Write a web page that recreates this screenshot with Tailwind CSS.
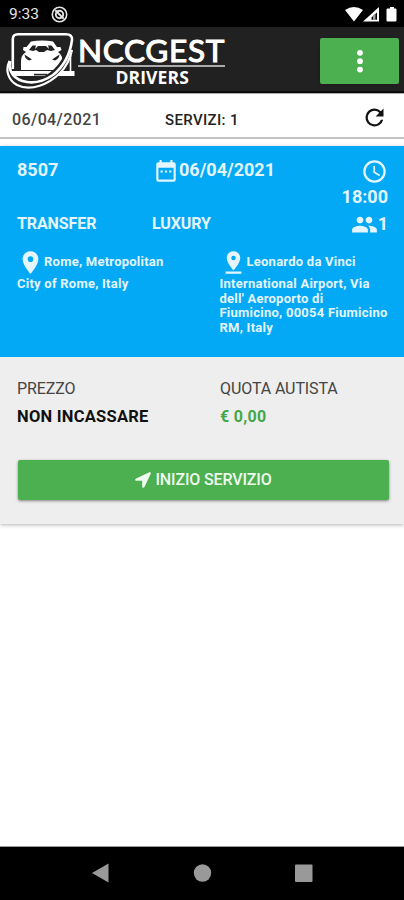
<!DOCTYPE html>
<html lang="it">
<head>
<meta charset="utf-8">
<meta name="viewport" content="width=device-width, initial-scale=1">
<title>NCCGEST Drivers</title>
<script src="https://cdn.jsdelivr.net/npm/@tailwindcss/browser@4"></script>
</head>
<body class="bg-white">
<div class="flex h-[900px] w-[404px] flex-col overflow-hidden bg-white font-['Roboto',sans-serif] whitespace-nowrap">
  <div class="flex h-[27px] shrink-0 items-center bg-black pt-[2px] pr-[7px] pl-[9px] text-[#e4e4e4]">
    <span class="w-[42px] text-[15.500px] leading-none">9:33</span>
    <svg class="h-[17px] w-[17px]" viewBox="0 0 17 17" fill="none" stroke="currentColor"><circle cx="8.5" cy="8.5" r="7.2" stroke-width="1.6"/><circle cx="8.5" cy="8.5" r="3.7" stroke-width="1.9"/><path d="M4.3 4.3l8.4 8.4" stroke-width="2"/></svg>
    <svg class="ml-auto h-[15px] w-[52px] text-white" viewBox="0 0 52 15" fill="currentColor"><path d="M0 3Q9 -3 18 3L9 14.5z"/><path fill-rule="evenodd" d="M18 14.500L34 0V14.500zM26.500 12.800h5.500V5.500l-5.500 5z"/><path d="M28 8.500l2.500-2v6.500H28z" fill="#999"/><path d="M42.500 1.500h2.500V0h4v1.500h1.500a1 1 0 0 1 1 1V13.500a1 1 0 0 1-1 1h-8a1 1 0 0 1-1-1V2.500a1 1 0 0 1 1-1z"/></svg>
  </div>

  <header class="flex h-[66px] shrink-0 items-start border-b-2 border-[#0c0c0c] bg-[#212121] pr-[5px] pl-[5px]">
    <svg class="mt-[4px] h-[60px] w-[72px] shrink-0" viewBox="5 31 72 60" fill="none" stroke="#fff">
      <path d="M8.500 71H74.500V76H12Q9 75 8.500 71z" fill="#fff" stroke="none"/>
      <path d="M34 74.600H47" stroke="#212121" stroke-width="1.600"/>
      <path d="M70.500 53V71" stroke-width="1.600"/>
      <path d="M21 70V61Q21 55 26 52L23 50L23.500 47H26.500L31 41.500Q42 39.500 53 41.500L57 47H60.500L61.500 50L58 52Q62.500 55 62.500 61L60 70z" fill="#fff" stroke="none"/>
      <path d="M29 50L32.500 45.500H36L35 49L38 46H46L49 49L48 45.500H51.500L55 50L51 51L47 50L44 52H39L36 50L33 51z" fill="#212121" stroke="none"/>
      <path d="M24.500 54.500L32 59.500L29 60.500Q25 59 24.500 54.500zM59.500 54.500L52 59.500L55 60.500Q59 59 59.500 54.500z" fill="#212121" stroke="none"/>
      <path d="M9 61C5 69 8 77 16 82C28 88 45 82 56 72Q66 63 69 50" stroke="#212121" stroke-width="7"/>
      <path d="M12.800 69V39Q12.800 34.300 18 34.300H66Q72.500 34.300 72 40C70 55 63 67 53 75Q40 84 27 82C14 80 8 72 10 61" stroke-width="2.600"/>
      <path d="M9.500 61C5 70 8 80 17 85C31 92 49 84 60 73Q69 64 72 50" stroke-width="2.200"/>
    </svg>
    <div class="mt-[7px] ml-px w-[147px] text-white">
      <div class="h-[33px] border-b-2 border-[#aaa] pt-[2px] font-['Lato',sans-serif] text-[31.500px] leading-[29px] tracking-[0.700px]"><span class="[-webkit-text-stroke:1.100px_white]">NCCGEST</span></div>
      <div class="pt-[2px] pl-[37.500px] font-['Open_Sans',sans-serif] text-[17.500px] leading-[17px] font-bold tracking-[0.1px]">DRIVERS</div>
    </div>
    <button class="mt-[11px] ml-auto flex h-[46px] w-[79px] items-center justify-center rounded-[2px] bg-[#4caf50] shadow" aria-label="Menu">
      <svg class="h-[24px] w-[8px]" viewBox="0 0 8 24" fill="#fff"><circle cx="4" cy="3.800" r="2.900"/><circle cx="4" cy="12.200" r="2.900"/><circle cx="4" cy="20.600" r="2.900"/></svg>
    </button>
  </header>

  <div class="flex h-[46px] shrink-0 items-center border-t border-b-2 border-t-[#aaa] border-b-[#c4c4c4] bg-white pt-[9px] pr-[16px] pl-[12px] text-[16px] font-medium text-[#444]">
    <span class="w-[153px] tracking-[0.4px]">06/04/2021</span>
    <span class="text-[15px] tracking-[0.35px] text-[#222]">SERVIZI: 1</span>
    <svg class="relative top-[-3px] ml-auto h-[27px] w-[27px]" viewBox="0 0 24 24" fill="#111"><path d="M17.650 6.350A7.960 7.960 0 0 0 12 4a8 8 0 1 0 7.730 10h-2.080A6 6 0 1 1 12 6c1.660 0 3.140.69 4.220 1.780L13 11h7V4z"/></svg>
  </div>

  <main class="mt-[7px] h-[378px] shrink-0 bg-[#eee] shadow-[0_1px_4px_rgba(0,0,0,0.3)]">
    <section class="h-[211px] bg-[#03a9f4] pr-[16px] pl-[17px] pt-[12px] font-bold text-[#e4f5fe]">
      <div class="flex h-[53px] items-start text-[18px] leading-[24px]">
        <span class="w-[136px]">8507</span>
        <svg class="mt-px h-[26px] w-[26px]" viewBox="0 0 24 24" fill="currentColor"><path d="M9 10.500H7v2h2zm4 0h-2v2h2zm4 0h-2v2h2zM19 3h-1V1h-2v2H8V1H6v2H5a2 2 0 0 0-2 2v14a2 2 0 0 0 2 2h14a2 2 0 0 0 2-2V5a2 2 0 0 0-2-2zm0 16H5V8h14z"/></svg>
        <span>06/04/2021</span>
        <div class="ml-auto flex flex-col items-end">
          <svg class="h-[27px] w-[27px]" viewBox="0 0 24 24" fill="currentColor"><path d="M12 2a10 10 0 1 0 0 20 10 10 0 0 0 0-20zm0 18a8 8 0 1 1 0-16 8 8 0 0 1 0 16zm.5-13H11v6l5.250 3.150.75-1.230-4.500-2.670z"/></svg>
          <span>18:00</span>
        </div>
      </div>
      <div class="flex h-[38px] items-start text-[16px] leading-[25px]">
        <span class="w-[135px] tracking-[-0.1px]">TRANSFER</span>
        <span class="tracking-[-0.1px]">LUXURY</span>
        <div class="ml-auto flex items-start text-[18px]">
          <svg class="h-[27px] w-[27px]" viewBox="0 0 24 24" fill="currentColor"><path d="M16 11c1.660 0 2.990-1.340 2.990-3S17.660 5 16 5s-3 1.340-3 3 1.340 3 3 3zm-8 0c1.660 0 2.990-1.340 2.990-3S9.660 5 8 5 5 6.340 5 8s1.340 3 3 3zm0 2c-2.330 0-7 1.170-7 3.500V19h14v-2.500c0-2.330-4.670-3.500-7-3.500zm8 0c-.29 0-.62.02-.97.05 1.160.84 1.970 1.970 1.970 3.450V19h6v-2.500c0-2.330-4.670-3.500-7-3.500z"/></svg>
          <span>1</span>
        </div>
      </div>
      <div class="grid grid-cols-[202.500px_1fr] text-[13px] leading-[14.600px] tracking-[0.240px]">
        <div>
          <div class="flex h-[27px] items-center"><svg class="h-[27px] w-[27px]" viewBox="0 0 24 24" fill="currentColor"><path d="M12 2C8.130 2 5 5.130 5 9c0 5.250 7 13 7 13s7-7.750 7-13c0-3.870-3.130-7-7-7zm0 9.500a2.500 2.500 0 1 1 0-5 2.500 2.500 0 0 1 0 5z"/></svg><span>Rome, Metropolitan</span></div>
          <div class="pt-[1px]">City of Rome, Italy</div>
        </div>
        <div>
          <div class="flex h-[27px] items-center"><svg class="h-[27px] w-[27px]" viewBox="0 0 24 24" fill="currentColor"><path d="M18 8c0-3.310-2.690-6-6-6S6 4.690 6 8c0 4.500 6 11 6 11s6-6.500 6-11zm-8 0a2 2 0 1 1 4 0 2 2 0 0 1-4 0zM5 20v2h14v-2z"/></svg><span>Leonardo da Vinci</span></div>
          <div class="pt-[1px]">International Airport, Via<br>dell' Aeroporto di<br>Fiumicino, 00054 Fiumicino<br>RM, Italy</div>
        </div>
      </div>
    </section>
    <section class="px-[17px] pt-[18px]">
      <div class="grid grid-cols-[202px_1fr] text-[16px] leading-[28px]">
        <div class="tracking-[-0.1px] text-[#444]">PREZZO</div>
        <div class="pl-px tracking-[-0.1px] text-[#444]">QUOTA AUTISTA</div>
        <div class="text-[16.500px] font-bold tracking-[0.250px] text-[#111]">NON INCASSARE</div>
        <div class="pl-px font-bold tracking-[0.300px] text-[#43a847]">€ 0,00</div>
      </div>
      <button class="mt-[29px] ml-px flex h-[40px] w-[371px] items-center justify-center rounded-[2px] bg-[#4caf50] text-[16px] font-medium tracking-[-0.15px] text-[#eefaee] shadow-[0_1px_3px_rgba(0,0,0,0.45)]">
        <svg class="mr-[4px] h-[16px] w-[16px]" viewBox="0 0 17 17" fill="currentColor"><path d="M15.200.300L1.200 6.800C-.6 7.700 0 9.400 1.500 9.400H7.600V15.500C7.600 17 9.400 17.400 10.200 15.800L16.700 1.800C17.200.7 16.300-.2 15.200.3z"/></svg>
        <span>INIZIO SERVIZIO</span>
      </button>
    </section>
  </main>

  <nav class="mt-auto h-[54px] shrink-0 border-t border-[#999] bg-black">
    <svg class="block h-[53px] w-[404px]" viewBox="0 0 404 53" fill="#999"><path d="M92 26L108.500 16.500V35.500z"/><circle cx="202.500" cy="26" r="8.700"/><rect x="295" y="17.500" width="17.500" height="17.500" rx="1"/></svg>
  </nav>
</div>
</body>
</html>
